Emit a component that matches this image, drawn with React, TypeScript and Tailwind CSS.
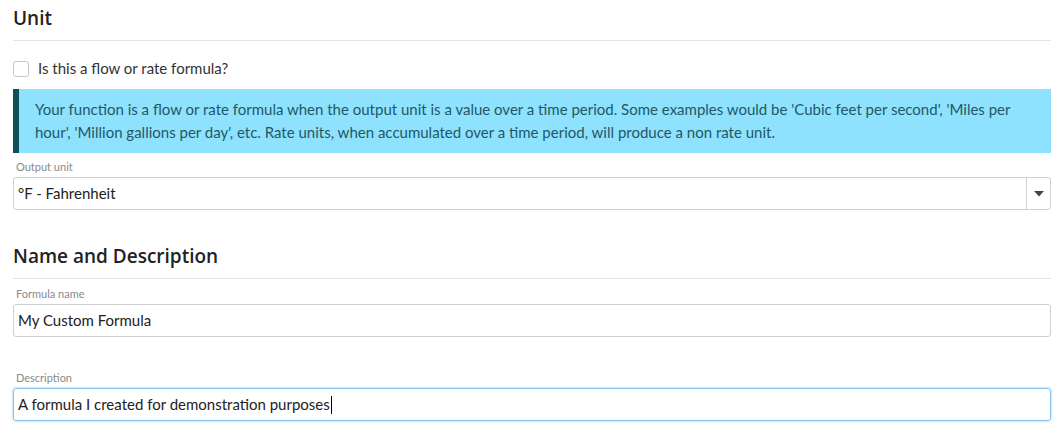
import React from "react";

function SectionTitle({ children }: { children: React.ReactNode }) {
  return (
    <div className="border-b border-[#e3e3e3] pb-[11px]">
      <h2 className="text-[19px] leading-[22px] font-semibold text-[#222] font-['Open_Sans',sans-serif]">{children}</h2>
    </div>
  );
}

function FieldLabel({ children }: { children: React.ReactNode }) {
  return <div className="text-[11px] leading-[14px] text-[#8a8a8a] pl-[3px] mb-[3px]">{children}</div>;
}

export default function App() {
  return (
    <div className="w-[1064px] h-[440px] bg-white font-['Lato',sans-serif] text-[#222] px-[13px] pt-[7px] overflow-hidden">
      <SectionTitle>Unit</SectionTitle>

      <label className="flex items-center gap-[9px] mt-[19px] h-[17px]">
        <span className="w-[16px] h-[16px] border border-[#c8c8c8] rounded-[3px] bg-white" />
        <span className="text-[15px] text-[#333]">Is this a flow or rate formula?</span>
      </label>

      <div className="mt-[12px] h-[64px] bg-[#8fe2fd] border-l-[6px] border-[#0f505b] pl-[16px] pr-[10px] pt-[9px] text-[15px] leading-[23px] text-[#1f5866]">
        Your function is a flow or rate formula when the output unit is a value over a time period. Some examples would be 'Cubic feet per second', 'Miles per hour', 'Million gallions per day', etc. Rate units, when accumulated over a time period, will produce a non rate unit.
      </div>

      <div className="mt-[7px]">
        <FieldLabel>Output unit</FieldLabel>
        <div className="flex h-[33px] border border-[#d0d0d0] rounded-[3px] bg-white">
          <div className="flex-1 flex items-center pl-[4px] text-[15px] text-[#222]">°F - Fahrenheit</div>
          <div className="w-[24px] border-l border-[#d0d0d0] flex items-center justify-center">
            <svg width="10" height="6" viewBox="0 0 10 6">
              <path d="M0 0 L10 0 L5 5.5 Z" fill="#444" />
            </svg>
          </div>
        </div>
      </div>

      <div className="mt-[35px]">
        <SectionTitle>Name and Description</SectionTitle>
      </div>

      <div className="mt-[8px]">
        <FieldLabel>Formula name</FieldLabel>
        <div className="h-[33px] border border-[#d0d0d0] rounded-[3px] flex items-center pl-[4px] text-[15px]">My Custom Formula</div>
      </div>

      <div className="mt-[34px]">
        <FieldLabel>Description</FieldLabel>
        <div className="h-[33px] border border-[#88bfe4] rounded-[3px] shadow-[0_0_3px_#9fcfee] flex items-center pl-[4px] text-[15px]">
          A formula I created for demonstration purposes
          <span className="inline-block w-px h-[18px] bg-black ml-px" />
        </div>
      </div>
    </div>
  );
}
